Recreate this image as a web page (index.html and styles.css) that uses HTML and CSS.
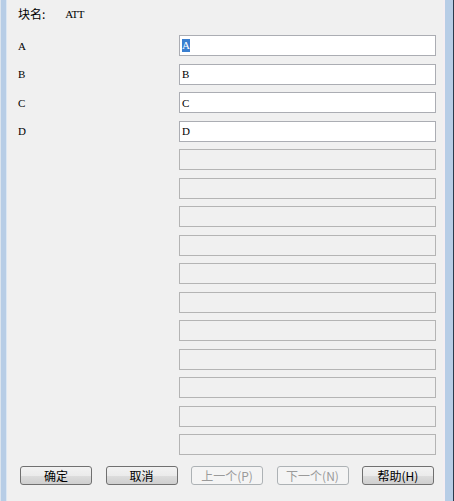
FILE: index.html
```html
<!DOCTYPE html>
<html lang="zh">
<head>
<meta charset="utf-8">
<title>块属性</title>
<link rel="stylesheet" href="styles.css">
</head>
<body>
<div class="window">
  <div class="frame-left"></div>
  <div class="content">
    <div class="header">
      <span class="cjk">块名:</span>
      <span class="latin block-name">ATT</span>
    </div>
    <div class="fields">
      <div class="row"><span class="label latin">A</span><div class="box filled"><span class="latin sel">A</span></div></div>
      <div class="row"><span class="label latin">B</span><div class="box filled"><span class="latin">B</span></div></div>
      <div class="row"><span class="label latin">C</span><div class="box filled"><span class="latin">C</span></div></div>
      <div class="row"><span class="label latin">D</span><div class="box filled"><span class="latin">D</span></div></div>
      <div class="row"><span class="label"></span><div class="box empty"></div></div>
      <div class="row"><span class="label"></span><div class="box empty"></div></div>
      <div class="row"><span class="label"></span><div class="box empty"></div></div>
      <div class="row"><span class="label"></span><div class="box empty"></div></div>
      <div class="row"><span class="label"></span><div class="box empty"></div></div>
      <div class="row"><span class="label"></span><div class="box empty"></div></div>
      <div class="row"><span class="label"></span><div class="box empty"></div></div>
      <div class="row"><span class="label"></span><div class="box empty"></div></div>
      <div class="row"><span class="label"></span><div class="box empty"></div></div>
      <div class="row"><span class="label"></span><div class="box empty"></div></div>
      <div class="row"><span class="label"></span><div class="box empty"></div></div>
    </div>
    <div class="buttons">
      <button class="btn">确定</button>
      <button class="btn">取消</button>
      <button class="btn" disabled>上一个(P)</button>
      <button class="btn" disabled>下一个(N)</button>
      <button class="btn">帮助(H)</button>
    </div>
  </div>
  <div class="frame-right"></div>
</div>
</body>
</html>
```
FILE: styles.css
```css
html, body {
  margin: 0;
  padding: 0;
  background: #f0f0f0;
}

.window {
  display: flex;
  width: 454px;
  height: 501px;
  overflow: hidden;
}

.frame-left {
  width: 7px;
  flex: none;
  background: linear-gradient(to right, #dbe4ee 0 1px, #b7cde6 1px 6px, #dbe6f2 6px 7px);
}

.frame-right {
  width: 9px;
  flex: none;
  background: linear-gradient(to right, #b7cde6 0 8px, #2a3a4c 8px 9px);
}

.content {
  flex: 1;
  padding-left: 11px;
  display: flex;
  flex-direction: column;
  background: #f0f0f0;
  box-shadow: inset -2px 0 0 #f4eef2;
}

.cjk {
  font-family: "Noto Sans CJK SC", sans-serif;
  font-size: 12px;
  color: #000;
}

.latin {
  font-family: "Liberation Serif", "Times New Roman", serif;
  font-size: 11px;
  letter-spacing: -0.5px;
  color: #000;
}

.header {
  height: 27px;
  display: flex;
  align-items: center;
}

.block-name {
  margin-left: 20px;
}

.fields {
  margin-top: 8px;
  display: flex;
  flex-direction: column;
  gap: 7.5px;
}

.row {
  display: flex;
  align-items: center;
  height: 21px;
}

.label {
  width: 161px;
  flex: none;
}

.box {
  width: 257px;
  height: 21px;
  box-sizing: border-box;
  border: 1px solid #abadb3;
  display: flex;
  align-items: center;
  padding-left: 2px;
}

.box.filled {
  background: #ffffff;
}

.box.empty {
  background: #f0f0f0;
  border-color: #b4b4b4;
}

.sel {
  background: #3a7fd0;
  color: #ffffff;
  line-height: 13px;
  letter-spacing: 0;
}

.buttons {
  margin-top: 11px;
  display: flex;
  gap: 13.5px;
  padding-left: 2px;
}

.btn {
  width: 72px;
  height: 19px;
  padding: 0;
  box-sizing: border-box;
  border: 1px solid #707070;
  border-radius: 3px;
  background: linear-gradient(to bottom, #f2f2f2 0%, #ebebeb 50%, #dddddd 50%, #cfcfcf 100%);
  font-family: "Noto Sans CJK SC", sans-serif;
  font-size: 12px;
  line-height: 17px;
  color: #000;
}

.btn:disabled {
  background: #f4f4f4;
  border-color: #adb2b5;
  color: #9a9a9a;
}
```
